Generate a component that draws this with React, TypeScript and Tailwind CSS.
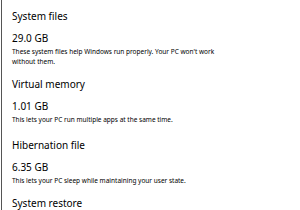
const sections = [
  {
    title: 'System files',
    size: '29.0 GB',
    lines: ["These system files help Windows run properly. Your PC won't work", 'without them.'],
    gap: 'mb-[11px]',
  },
  {
    title: 'Virtual memory',
    size: '1.01 GB',
    lines: ['This lets your PC run multiple apps at the same time.'],
    gap: 'mb-[13px]',
  },
  {
    title: 'Hibernation file',
    size: '6.35 GB',
    lines: ['This lets your PC sleep while maintaining your user state.'],
    gap: 'mb-[11px]',
  },
]

export default function App() {
  return (
    <div className="flex h-[210px] w-[300px] overflow-hidden bg-white font-['Noto_Sans',sans-serif] text-black">
      <div className="ml-[1px] w-[1px] shrink-0 bg-[#555]" />
      <div className="flex flex-col pl-[10px] pt-[9px]">
        {sections.map((s) => (
          <div key={s.title} className={s.gap}>
            <h2 className="text-[10px] leading-[14px]">{s.title}</h2>
            <div className="mt-[8px] text-[10px] leading-[14px]">{s.size}</div>
            <p className="mt-[2px] text-[6.5px] leading-[9.5px]">
              {s.lines.map((l) => (
                <span key={l} className="block">{l}</span>
              ))}
            </p>
          </div>
        ))}
        <h2 className="text-[10px] leading-[14px]">System restore</h2>
      </div>
    </div>
  )
}
